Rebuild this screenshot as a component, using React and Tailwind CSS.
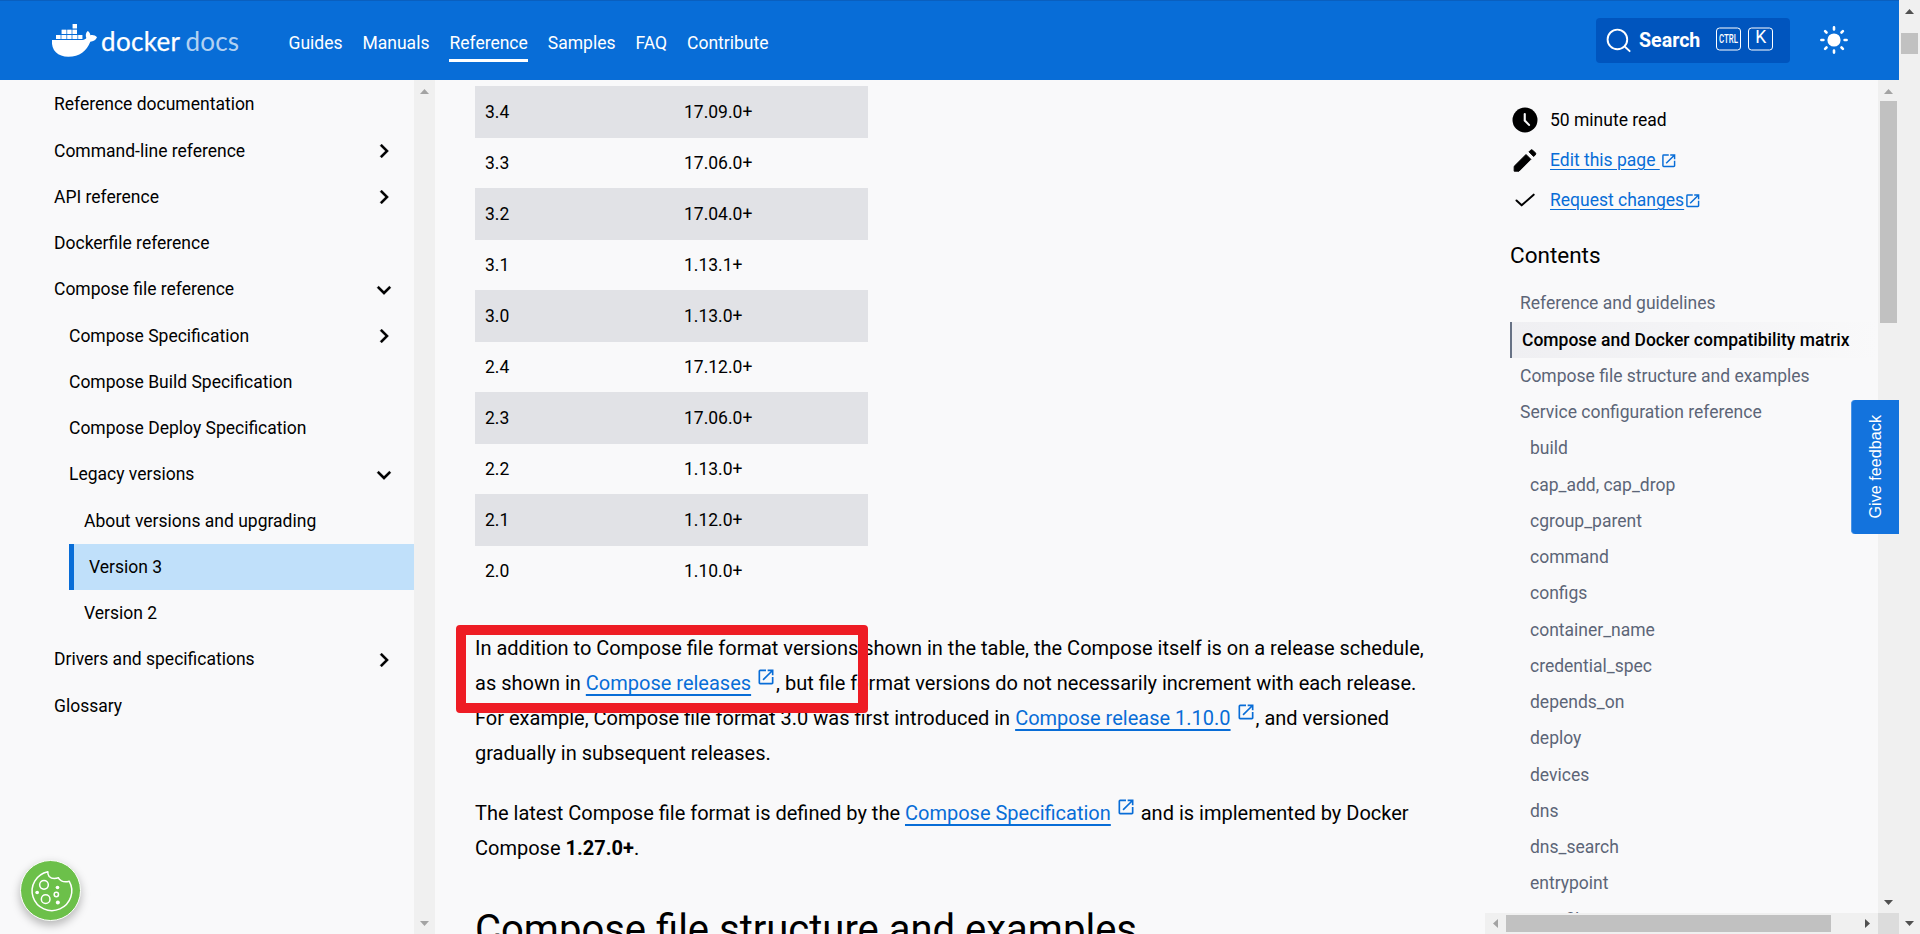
import React from 'react';

const NAV = ['Guides', 'Manuals', 'Reference', 'Samples', 'FAQ', 'Contribute'];

const SIDEBAR = [
  { label: 'Reference documentation', level: 0 },
  { label: 'Command-line reference', level: 0, icon: 'right' },
  { label: 'API reference', level: 0, icon: 'right' },
  { label: 'Dockerfile reference', level: 0 },
  { label: 'Compose file reference', level: 0, icon: 'down' },
  { label: 'Compose Specification', level: 1, icon: 'right' },
  { label: 'Compose Build Specification', level: 1 },
  { label: 'Compose Deploy Specification', level: 1 },
  { label: 'Legacy versions', level: 1, icon: 'down' },
  { label: 'About versions and upgrading', level: 2 },
  { label: 'Version 3', level: 2, active: true },
  { label: 'Version 2', level: 2 },
  { label: 'Drivers and specifications', level: 0, icon: 'right' },
  { label: 'Glossary', level: 0 },
];

const VERSIONS = [
  ['3.4', '17.09.0+'],
  ['3.3', '17.06.0+'],
  ['3.2', '17.04.0+'],
  ['3.1', '1.13.1+'],
  ['3.0', '1.13.0+'],
  ['2.4', '17.12.0+'],
  ['2.3', '17.06.0+'],
  ['2.2', '1.13.0+'],
  ['2.1', '1.12.0+'],
  ['2.0', '1.10.0+'],
];

const TOC = [
  { label: 'Reference and guidelines' },
  { label: 'Compose and Docker compatibility matrix', active: true },
  { label: 'Compose file structure and examples' },
  { label: 'Service configuration reference' },
  { label: 'build', sub: true },
  { label: 'cap_add, cap_drop', sub: true },
  { label: 'cgroup_parent', sub: true },
  { label: 'command', sub: true },
  { label: 'configs', sub: true },
  { label: 'container_name', sub: true },
  { label: 'credential_spec', sub: true },
  { label: 'depends_on', sub: true },
  { label: 'deploy', sub: true },
  { label: 'devices', sub: true },
  { label: 'dns', sub: true },
  { label: 'dns_search', sub: true },
  { label: 'entrypoint', sub: true },
  { label: 'env_file', sub: true },
];

const INDENT = ['pl-[54px]', 'pl-[69px]', 'pl-[84px]'];

function Logo() {
  return (
    <svg className="h-[80px] w-[200px] shrink-0" viewBox="0 0 200 80">
      <g fill="#fff">
        <g transform="translate(-1 16) scale(0.33333)">
          <path d="M12 72H103C109 71 113 69 115 66C112 59 113 50 119 45C124 48 127 53 127 58C134 56 142 58 147 64C143 73 136 77 127 77C116 105 95 122 61 122C30 122 9 104 12 72Z" />
          <path d="M24 57h79v12H24zM41 41h46v13H41zM74 24h13v14H74z" fillOpacity="0.45" />
          <path d="M24 57h13v12H24zM41 57h13v12H41zM58 57h12v12H58zM74 57h13v12H74zM91 57h12v12H91zM41 41h13v13H41zM58 41h12v13H58zM74 41h13v13H74zM74 24h13v13H74z" />
        </g>
        <text x="52" y="50.6" fontFamily="Lato" fontSize="26" textLength="79" stroke="#fff" strokeWidth="0.25">docker</text>
        <text x="136.5" y="50.6" fontFamily="Lato" fontSize="26" textLength="53.5" fillOpacity="0.7">docs</text>
      </g>
    </svg>
  );
}

function OpenIcon({ className }) {
  return (
    <svg className={className} viewBox="0 0 24 24" fill="currentColor">
      <path d="M19 19H5V5h7V3H5a2 2 0 0 0-2 2v14a2 2 0 0 0 2 2h14c1.1 0 2-.9 2-2v-7h-2v7zM14 3v2h3.59l-9.83 9.83 1.41 1.41L19 6.41V10h2V3h-7z" />
    </svg>
  );
}

function Chevron({ dir }) {
  return (
    <svg className="size-7 shrink-0" viewBox="0 0 24 24" fill="#000" stroke="#000" strokeWidth="0.2">
      {dir === 'right' ? (
        <path d="M10 6 8.59 7.41 13.17 12l-4.58 4.59L10 18l6-6z" />
      ) : (
        <path d="M16.59 8.59 12 13.17 7.41 8.59 6 10l6 6 6-6z" />
      )}
    </svg>
  );
}

const ARROWS = {
  up: 'M0 5 4.5 0 9 5z',
  down: 'M0 0 4.5 5 9 0z',
  left: 'M5 0 0 4.5 5 9z',
  right: 'M0 0 5 4.5 0 9z',
};

function Arrow({ dir, dim }) {
  const vertical = dir === 'up' || dir === 'down';
  return (
    <span className="flex size-[21px] shrink-0 items-center justify-center">
      <svg
        className={vertical ? 'h-[5px] w-[9px]' : 'h-[9px] w-[5px]'}
        viewBox={vertical ? '0 0 9 5' : '0 0 5 9'}
        fill={dim ? '#a3a3a3' : '#505050'}
      >
        <path d={ARROWS[dir]} />
      </svg>
    </span>
  );
}

function ExtLink({ children }) {
  return (
    <a className="text-[#086dd7]">
      <span className="underline decoration-2 underline-offset-4">{children}</span>{' '}
      <OpenIcon className="inline size-5 align-[3px]" />
    </a>
  );
}

function Header() {
  return (
    <header className="flex h-20 shrink-0 border-t border-[#0a5fbe] bg-[#086dd7] pl-[49px] text-white">
      <div className="-mt-px flex h-20 flex-1 items-center">
        <Logo />
        <nav className="ml-[39.5px] flex h-full items-start gap-5 pt-[30px]">
          {NAV.map((n) => (
            <a
              key={n}
              className={
                n === 'Reference'
                  ? 'h-8 border-b-[3px] border-white text-[17.5px] leading-[26px]'
                  : 'h-8 text-[17.5px] leading-[26px]'
              }
            >
              {n}
            </a>
          ))}
        </nav>
        <div className="ml-auto flex h-[45px] w-[194px] items-center rounded bg-[#0055be] pl-[10px]">
          <svg className="size-[26px]" viewBox="0 0 26 26" fill="none" stroke="#fff" strokeWidth="1.9">
            <circle cx="11.4" cy="12.4" r="9.8" />
            <path d="M18.4 19.2 24.2 24.6" />
          </svg>
          <span className="ml-[7px] w-[76px] pt-[2px] text-[19.6px] font-bold leading-6">Search</span>
          <svg className="-mt-[3px] h-6 w-[60px]" viewBox="0 0 60 24" fill="none" stroke="#fff">
            <rect x="1.5" y="1" width="24" height="22" rx="3" />
            <rect x="33.5" y="1" width="24" height="22" rx="3" />
            <text x="4" y="15.6" fontFamily="Roboto" fontSize="12.5" fontWeight="500" fill="#fff" stroke="none" textLength="19" lengthAdjust="spacingAndGlyphs">CTRL</text>
            <text x="40.2" y="16.4" fontFamily="Roboto" fontSize="17.5" fill="#fff" stroke="none">K</text>
          </svg>
        </div>
        <svg className="mr-[50px] ml-[29px] size-[30px]" viewBox="-15 -15 30 30">
          <circle r="6.6" fill="#fff" />
          <path
            d="M0-12.6V-10.6M0 12.6V10.6M-12.6 0H-10.6M12.6 0H10.6M-8.9-8.9-7.5-7.5M8.9 8.9 7.5 7.5M-8.9 8.9-7.5 7.5M8.9-8.9 7.5-7.5"
            stroke="#fff"
            strokeWidth="2.6"
            strokeLinecap="round"
          />
        </svg>
      </div>
    </header>
  );
}

function Sidebar() {
  return (
    <aside className="flex w-[435px] shrink-0">
      <nav className="flex-1 pt-[1.4px]">
        {SIDEBAR.map((it) =>
          it.active ? (
            <div
              key={it.label}
              className="ml-[69px] flex h-[46.25px] items-center border-l-[5px] border-[#086dd7] bg-[#c0e0fa] pl-[15px]"
            >
              {it.label}
            </div>
          ) : (
            <div key={it.label} className={`flex h-[46.25px] items-center justify-between pr-4 ${INDENT[it.level]}`}>
              <span>{it.label}</span>
              {it.icon && <Chevron dir={it.icon} />}
            </div>
          )
        )}
      </nav>
      <div className="flex w-[21px] flex-col justify-between bg-[#f0f0f0] pt-px">
        <Arrow dir="up" dim />
        <Arrow dir="down" dim />
      </div>
    </aside>
  );
}

function Article() {
  return (
    <main className="relative flex-1 overflow-hidden pt-[6px] pl-10">
      <div className="w-[393px]">
        {VERSIONS.map(([v, e], i) => (
          <div
            key={v}
            className={
              i % 2 === 0
                ? 'flex h-[52px] items-center bg-[#e1e2e6] pl-[10px]'
                : 'flex h-[50px] items-center pl-[10px]'
            }
          >
            <span className="w-[199px]">{v}</span>
            <span>{e}</span>
          </div>
        ))}
      </div>
      <p className="mt-[35px] w-[960px] text-[20px] leading-[35px]">
        In addition to Compose file format versions shown in the table, the Compose itself is on a release schedule,
        <br />
        as shown in <ExtLink>Compose releases</ExtLink>, but file format versions do not necessarily increment with
        each release.
        <br />
        For example, Compose file format 3.0 was first introduced in <ExtLink>Compose release 1.10.0</ExtLink>, and
        versioned
        <br />
        gradually in subsequent releases.
      </p>
      <p className="mt-[25px] w-[960px] text-[20px] leading-[35px]">
        The latest Compose file format is defined by the <ExtLink>Compose Specification</ExtLink> and is implemented
        by Docker
        <br />
        Compose <strong className="font-bold">1.27.0+</strong>.
      </p>
      <h2 className="mt-[39px] text-[40px] leading-[50px] whitespace-nowrap">Compose file structure and examples</h2>
      <div className="absolute top-[545px] left-[21px] h-[88px] w-[412px] rounded border-10 border-[#ee1c24]" />
    </main>
  );
}

function Contents() {
  return (
    <aside className="flex w-[414px] shrink-0 flex-col">
      <div className="flex min-h-0 flex-1">
        <div className="flex-1 overflow-hidden pt-5 pl-[25px]">
          <div className="flex h-10 items-center gap-[10px]">
            <svg className="size-[30px]" viewBox="0 0 24 24">
              <circle cx="12" cy="12" r="10" />
              <path d="M11.8 7.2V12.4L15.2 15.9" fill="none" stroke="#f9f9fa" strokeWidth="1.7" strokeLinecap="round" />
            </svg>
            <span>50 minute read</span>
          </div>
          <div className="flex h-10 items-center gap-[10px] text-[#086dd7]">
            <svg className="size-[30px]" viewBox="0 0 90 90" fill="#000" stroke="#000" strokeWidth="3" strokeLinejoin="round">
              <path d="M12.500 64 48 28.500 62.500 43 27 78.500H12.500Z" />
              <path d="M57 20.500 62 15.500Q65 12.500 68 15.500L76 23.500Q79 26.500 76 29.500L71 34.500Z" />
            </svg>
            <span className="flex items-center">
              <span className="whitespace-pre underline decoration-1 underline-offset-[3px]">Edit this page </span>
              <OpenIcon className="mt-[2px] size-[17.5px]" />
            </span>
          </div>
          <div className="flex h-10 items-center gap-[10px] text-[#086dd7]">
            <svg className="size-[30px]" viewBox="0 0 90 90" fill="none" stroke="#000" strokeWidth="6" strokeLinecap="round" strokeLinejoin="round">
              <path d="M19.500 46.500 35 61 71 29" />
            </svg>
            <span className="flex items-center">
              <span className="underline decoration-1 underline-offset-[3px]">Request changes</span>
              <OpenIcon className="mt-[2px] size-[17.5px]" />
            </span>
          </div>
          <div className="mt-[22px] text-[22.5px] leading-[26px]">Contents</div>
          <div className="mt-[17.4px] text-[#5c6577]">
            {TOC.map((t) => (
              <div
                key={t.label}
                className={
                  t.active
                    ? 'flex h-[36.25px] items-center border-l-2 border-[#677285] bg-linear-to-r from-[#efeff2] to-[#f9f9fa] pl-[10px] font-medium text-black'
                    : t.sub
                      ? 'flex h-[36.25px] items-center pl-5'
                      : 'flex h-[36.25px] items-center pl-[10px]'
                }
              >
                {t.label}
              </div>
            ))}
          </div>
        </div>
        <div className="flex w-[21px] flex-col bg-[#f0f0f0] px-[2px] pt-px">
          <div className="-mx-[2px]">
            <Arrow dir="up" dim />
          </div>
          <div className="-mt-px h-[222px] bg-[#c1c1c1]" />
          <div className="-mx-[2px] mt-auto">
            <Arrow dir="down" />
          </div>
        </div>
      </div>
      <div className="flex h-[21px] shrink-0">
        <div className="flex flex-1 items-center bg-[#f0f0f0]">
          <Arrow dir="left" dim />
          <div className="h-[17px] w-[325px] bg-[#c1c1c1]" />
          <div className="ml-auto">
            <Arrow dir="right" />
          </div>
        </div>
        <div className="w-[21px] bg-[#dcdcdc]" />
      </div>
    </aside>
  );
}

function CookieButton() {
  return (
    <div className="absolute top-[860px] left-5 size-[61px] rounded-full border border-white bg-[#6cc04a] shadow-[0_4px_10px_rgba(0,0,0,0.28)]">
      <svg className="size-[59px]" viewBox="-88.500 -88.500 177 177" fill="none" stroke="#fff" strokeWidth="4.500">
        <path d="M-8-56.500A59.500 59 0 1 0 56-28Q43-24 33-29Q24-34 24-38Q6-32-4-42Q-9-48-8-56.500Z" strokeLinejoin="round" />
        <circle cx="-19.500" cy="-17" r="13" />
        <circle cx="-14.500" cy="26" r="13" />
        <circle cx="17.500" cy="12" r="6.500" />
        <g fill="#fff" stroke="none">
          <circle cx="21" cy="-9" r="5.500" />
          <circle cx="-40" cy="6" r="5.500" />
          <circle cx="22" cy="36" r="6" />
        </g>
      </svg>
    </div>
  );
}

export default function App() {
  return (
    <div className="relative flex h-[934px] w-[1920px] overflow-hidden bg-[#f9f9fa] font-['Roboto',sans-serif] text-[17.5px] leading-[26.25px] text-black">
      <div className="flex min-w-0 flex-1 flex-col">
        <Header />
        <div className="flex min-h-0 flex-1">
          <Sidebar />
          <Article />
          <Contents />
        </div>
      </div>
      <div className="flex w-[21px] shrink-0 flex-col bg-[#f0f0f0] pt-px">
        <Arrow dir="up" />
        <div className="mt-[11px] ml-[2px] h-[21px] w-[17px] bg-[#c1c1c1]" />
        <div className="mt-auto">
          <Arrow dir="down" />
        </div>
      </div>
      <div className="absolute top-[400px] left-[1851px] flex h-[134px] w-12 items-center justify-center rounded-l border-l border-[#4a94e6] bg-[#1373dd]">
        <span className="rotate-180 font-['Liberation_Sans',sans-serif] text-[16.2px] text-white [writing-mode:vertical-rl]">
          Give feedback
        </span>
      </div>
      <CookieButton />
    </div>
  );
}
